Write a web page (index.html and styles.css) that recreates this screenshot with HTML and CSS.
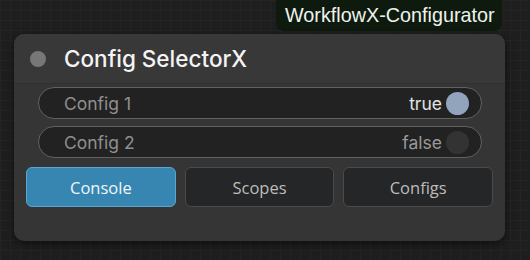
FILE: index.html
```html
<!DOCTYPE html>
<html lang="en">
<head>
    <meta charset="UTF-8">
    <meta name="viewport" content="width=device-width, initial-scale=1.0">
    <title>Config SelectorX</title>
    <link rel="stylesheet" href="styles.css">
</head>
<body>
    <div class="canvas">
        <div class="group-badge">WorkflowX-Configurator</div>
        <div class="node">
            <div class="node-title">
                <span class="node-dot"></span>
                <span class="node-name">Config SelectorX</span>
            </div>
            <div class="toggle on">
                <span class="toggle-label">Config 1</span>
                <span class="toggle-value">true</span>
                <span class="toggle-knob"></span>
            </div>
            <div class="toggle">
                <span class="toggle-label">Config 2</span>
                <span class="toggle-value">false</span>
                <span class="toggle-knob"></span>
            </div>
            <div class="tabs">
                <button class="tab active">Console</button>
                <button class="tab">Scopes</button>
                <button class="tab">Configs</button>
            </div>
        </div>
    </div>
</body>
</html>
```

FILE: styles.css
```css
body {
    margin: 0;
    width: 530px;
    height: 260px;
    overflow: hidden;
    background-color: #1e1e1e;
    background-image:
        linear-gradient(to right, #242424 1px, transparent 1px),
        linear-gradient(to bottom, #242424 1px, transparent 1px);
    background-size: 10px 10px;
    font-family: "Liberation Sans", Arial, sans-serif;
    color: #fff;
}
.canvas {
    display: flex;
    flex-direction: column;
}
.group-badge {
    align-self: flex-start;
    margin-left: 276px;
    width: 226px;
    height: 31px;
    box-sizing: border-box;
    padding: 4px 0 0 9px;
    background: #0f1a0f;
    border-radius: 0 0 8px 8px;
    font-size: 19.8px;
    color: #eef2ee;
    white-space: nowrap;
}
.node {
    margin: 3px 0 0 14px;
    width: 491px;
    height: 207px;
    box-sizing: border-box;
    background: #353535;
    border-radius: 10px;
    box-shadow: 0 3px 8px rgba(0, 0, 0, 0.5);
}
.node-title {
    display: flex;
    align-items: center;
    height: 50px;
    padding-left: 16px;
    background: #383838;
    border-radius: 10px 10px 0 0;
    border-bottom: 1px solid #313131;
    box-sizing: border-box;
}
.node-dot {
    width: 16px;
    height: 16px;
    border-radius: 50%;
    background: #777;
}
.node-name {
    margin-left: 18px;
    font-family: Inter, "Liberation Sans", sans-serif;
    font-size: 22.5px;
    font-weight: 500;
    color: #f4f4f4;
}
.toggle {
    display: flex;
    align-items: center;
    height: 32px;
    margin: 3px 23px 0 24px;
    padding: 0 12px 0 25px;
    box-sizing: border-box;
    background: #222;
    border: 1px solid #616161;
    border-radius: 16px;
    font-family: Inter, "Liberation Sans", sans-serif;
    font-size: 17.5px;
}
.toggle + .toggle {
    margin-top: 7px;
}
.toggle-label {
    flex: 1;
    color: #8f8f8f;
}
.toggle-value {
    color: #999;
    margin-right: 4px;
}
.toggle-knob {
    width: 23px;
    height: 23px;
    border-radius: 50%;
    background: #333;
}
.toggle.on .toggle-value {
    color: #e2e2e2;
}
.toggle.on .toggle-knob {
    background: #91a4bc;
}
.tabs {
    display: flex;
    gap: 9px;
    margin: 9px 12px 0 12px;
}
.tab {
    flex: 1;
    height: 40px;
    background: #252627;
    border: 1px solid #4a4a4a;
    border-radius: 6px;
    font-family: "Open Sans", sans-serif;
    font-size: 16.5px;
    color: #bdbdbd;
    cursor: pointer;
}
.tab.active {
    background: #3786b2;
    border-color: #5aa6d2;
    color: #eef6fb;
}
```
